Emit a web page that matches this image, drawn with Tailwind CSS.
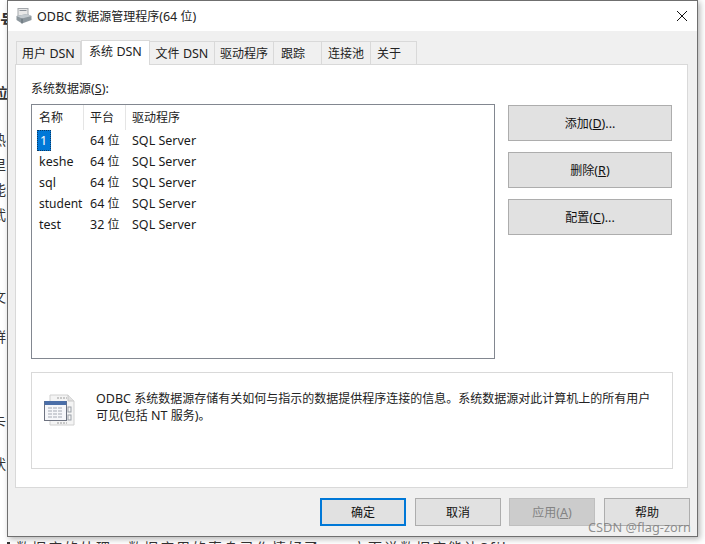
<!DOCTYPE html>
<html lang="zh">
<head>
  <meta charset="UTF-8">
  <title>ODBC 数据源管理程序(64 位)</title>
  <script src="https://cdn.jsdelivr.net/npm/@tailwindcss/browser@4"></script>
</head>
<body class="bg-white font-['Noto_Sans','Noto_Sans_CJK_SC',sans-serif] text-[12px] leading-[17px] text-[#111]">
  <div class="relative w-[705px] h-[544px] overflow-hidden bg-white">
    <!-- page behind the dialog -->
    <div class="absolute left-0 top-[12px] text-[17px] text-[#333] font-bold">号</div>
    <div class="absolute left-[-6px] top-[84px] text-[14px] text-[#333] font-bold">位</div>
    <div class="absolute left-[-8px] top-[127px] text-[14px] text-[#333] leading-[25px]">热<br>里<br>能<br>武</div>
    <div class="absolute left-[-8px] top-[288px] text-[14px] text-[#333]">文</div>
    <div class="absolute left-[-8px] top-[328px] text-[14px] text-[#333]">群</div>
    <div class="absolute left-[-8px] top-[413px] text-[14px] text-[#333]">卡</div>
    <div class="absolute left-[-8px] top-[455px] text-[14px] text-[#333]">状</div>
    <div class="absolute left-[7px] top-[542px] w-[3px] h-[2px] bg-[#333]"></div>
    <div class="absolute left-[16px] top-[539px] text-[14px] leading-[18px] tracking-[2px] text-[#333] whitespace-nowrap">数据库的处理，数据库用的真身已作情好了，一方面说数据库能让Sfile</div>

    <!-- dialog -->
    <div class="absolute left-[7px] top-0 w-[691px] h-[537px] flex flex-col bg-[#f0f0f0] border border-[#6f6f6f] shadow-[2px_2px_6px_rgba(0,0,0,0.3)]">
      <div class="h-[30px] shrink-0 bg-white flex items-center pl-[8px] pr-[8px]">
        <svg width="16" height="16" viewBox="0 0 16 16" class="mr-[5px]">
          <rect x="2" y="0.5" width="10" height="9" fill="#e8e8e8" stroke="#a4a8ac"/>
          <rect x="3.5" y="2" width="7" height="1" fill="#8b9199"/>
          <path d="M0.5 8 L11 6 L15.5 8 L15.5 12 L6 15.5 L0.5 12 Z" fill="#8d979e"/>
          <path d="M0.5 8 L6 10.5 L15.5 8 L11 6 Z" fill="#c3cacf"/>
          <path d="M6 10.5 L6 15.5" stroke="#5f6a72"/>
        </svg>
        <span class="text-[#222]"><span class="text-[12.5px]">ODBC </span>数据源管理程序<span class="text-[12.5px]">(64 </span>位<span class="text-[12.5px]">)</span></span>
        <svg width="12" height="12" viewBox="0 0 12 12" class="ml-auto mr-[1px]">
          <path d="M1 1 L11 11 M11 1 L1 11" stroke="#111" stroke-width="1" fill="none"/>
        </svg>
      </div>

      <div class="flex-1 flex flex-col px-[7px]">
        <!-- tabs -->
        <div class="flex items-end h-[33px] shrink-0 relative z-10 text-[#222]">
          <div class="w-[65px] h-[23px] flex items-center justify-center bg-[#f0f0f0] border border-b-0 border-[#d9d9d9] ml-[1px]"><span>用户<span class="text-[12.5px]"> DSN</span></span></div>
          <div class="w-[69px] h-[25px] pb-[3px] -mb-[1px] flex items-center justify-center bg-white border border-b-0 border-[#d9d9d9]"><span>系统<span class="text-[12.5px]"> DSN</span></span></div>
          <div class="w-[65px] h-[23px] flex items-center justify-center bg-[#f0f0f0] border-t border-r border-[#d9d9d9]"><span>文件<span class="text-[12.5px]"> DSN</span></span></div>
          <div class="w-[59px] h-[23px] flex items-center justify-center bg-[#f0f0f0] border-t border-r border-[#d9d9d9]">驱动程序</div>
          <div class="w-[48px] h-[23px] flex items-center pl-[7px] bg-[#f0f0f0] border-t border-r border-[#d9d9d9]">跟踪</div>
          <div class="w-[49px] h-[23px] flex items-center justify-center bg-[#f0f0f0] border-t border-r border-[#d9d9d9]">连接池</div>
          <div class="w-[46px] h-[23px] flex items-center pl-[6px] bg-[#f0f0f0] border-t border-r border-[#d9d9d9]">关于</div>
        </div>

        <!-- system dsn panel -->
        <div class="w-[673px] h-[424px] bg-white border border-[#d9d9d9] px-[15px] pt-[15px]">
          <div class="h-[24px] text-[#222]">系统数据源<span class="text-[12.5px]">(<span class="underline">S</span>):</span></div>
          <div class="flex gap-[13px]">
            <div class="w-[464px] h-[255px] border border-[#828790] bg-white">
              <div class="flex h-[25px] items-center text-[#222]">
                <div class="w-[52px] h-full pl-[7px] border-r border-[#e5e5e5] flex items-center">名称</div>
                <div class="w-[42px] h-full pl-[6px] border-r border-[#e5e5e5] flex items-center">平台</div>
                <div class="pl-[6px]">驱动程序</div>
              </div>
              <div class="text-[#1a1a1a] text-[12.5px]">
                <div class="flex h-[21px] items-center">
                  <div class="w-[52px] pl-[5px] h-[21px]"><span class="block w-[14px] h-[21px] leading-[21px] pl-[3px] bg-[#0078d7] text-white outline-1 outline-dotted outline-[#0a3a66] -outline-offset-1">1</span></div>
                  <div class="w-[42px] pl-[6px]">64 <span class="text-[12px]">位</span></div>
                  <div class="pl-[6px]">SQL Server</div>
                </div>
                <div class="flex h-[21px] items-center">
                  <div class="w-[52px] pl-[7px]">keshe</div>
                  <div class="w-[42px] pl-[6px]">64 <span class="text-[12px]">位</span></div>
                  <div class="pl-[6px]">SQL Server</div>
                </div>
                <div class="flex h-[21px] items-center">
                  <div class="w-[52px] pl-[7px]">sql</div>
                  <div class="w-[42px] pl-[6px]">64 <span class="text-[12px]">位</span></div>
                  <div class="pl-[6px]">SQL Server</div>
                </div>
                <div class="flex h-[21px] items-center">
                  <div class="w-[52px] pl-[7px] text-[12px]">student</div>
                  <div class="w-[42px] pl-[6px]">64 <span class="text-[12px]">位</span></div>
                  <div class="pl-[6px]">SQL Server</div>
                </div>
                <div class="flex h-[21px] items-center">
                  <div class="w-[52px] pl-[7px]">test</div>
                  <div class="w-[42px] pl-[6px]">32 <span class="text-[12px]">位</span></div>
                  <div class="pl-[6px]">SQL Server</div>
                </div>
              </div>
            </div>
            <div class="flex flex-col gap-[11px] pt-[1px]">
              <button class="w-[164px] h-[36px] bg-[#e1e1e1] border border-[#adadad]">添加<span class="text-[12.5px]">(<span class="underline">D</span>)...</span></button>
              <button class="w-[164px] h-[36px] bg-[#e1e1e1] border border-[#adadad]">删除<span class="text-[12.5px]">(<span class="underline">R</span>)</span></button>
              <button class="w-[164px] h-[36px] bg-[#e1e1e1] border border-[#adadad]">配置<span class="text-[12.5px]">(<span class="underline">C</span>)...</span></button>
            </div>
          </div>
          <div class="mt-[13px] w-[642px] h-[97px] border border-[#d9d9d9] flex">
            <div class="w-[64px] shrink-0 pl-[12px] pt-[21px]">
              <svg width="32" height="33" viewBox="0 0 32 33">
                <path d="M6 1 H24 L30 7 V31 H6 Z" fill="#f4f4f4" stroke="#d0d0d0"/>
                <path d="M24 1 V7 H30" fill="#e2e2e2" stroke="#c8c8c8"/>
                <path d="M13 4 h10 M13 29 h10" stroke="#b8b8b8" stroke-width="1.5" stroke-dasharray="2 1"/>
                <rect x="24" y="13" width="3" height="5" fill="none" stroke="#9aa0a8"/>
                <rect x="24" y="21" width="3" height="5" fill="none" stroke="#9aa0a8"/>
                <rect x="0.5" y="7.5" width="22" height="19" fill="#f6f7fa" stroke="#6d7280"/>
                <rect x="0.5" y="7" width="22" height="4" fill="#4a6ea8"/>
                <path d="M4 14 h15 M4 17 h15 M4 20 h15 M4 23 h15" stroke="#a4a9b3" stroke-dasharray="4 1"/>
              </svg>
            </div>
            <div class="pt-[17px] w-[560px] text-[#222]"><span class="text-[12.5px]">ODBC </span>系统数据源存储有关如何与指示的数据提供程序连接的信息。系统数据源对此计算机上的所有用户可见<span class="text-[12.5px]">(</span>包括<span class="text-[12.5px]"> NT </span>服务<span class="text-[12.5px]">)</span>。</div>
          </div>
        </div>

        <!-- footer buttons -->
        <div class="flex justify-end gap-[9px] pt-[10px] w-[675px]">
          <button class="w-[86px] h-[28px] bg-[#e1e1e1] border-2 border-[#0078d7]">确定</button>
          <button class="w-[86px] h-[28px] bg-[#e1e1e1] border border-[#adadad]">取消</button>
          <button class="w-[86px] h-[28px] -ml-[1px] bg-[#cccccc] border border-[#bfbfbf] text-[#838383]">应用<span class="text-[12.5px]">(<span class="underline">A</span>)</span></button>
          <button class="w-[86px] h-[28px] bg-[#e1e1e1] border border-[#adadad]">帮助</button>
        </div>
      </div>
    </div>

    <!-- watermark -->
    <div class="absolute left-[588px] top-[518px] text-[12.8px] leading-[18px] text-[#7d7d7d]/85">CSDN @flag-zorn</div>
  </div>
</body>
</html>
